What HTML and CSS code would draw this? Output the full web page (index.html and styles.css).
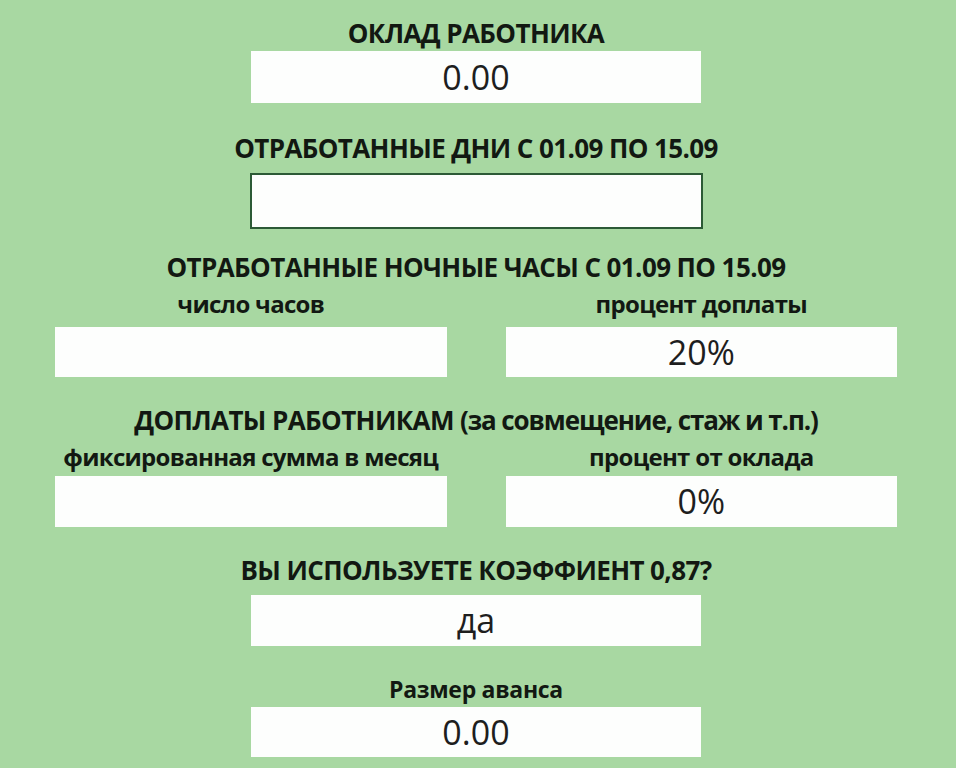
FILE: index.html
```html
<!DOCTYPE html>
<html lang="ru">
<head>
    <meta charset="UTF-8">
    <meta name="viewport" content="width=device-width, initial-scale=1.0">
    <title>Расчёт аванса</title>
    <link rel="stylesheet" href="styles.css">
</head>
<body>
    <main class="form">
        <h2 class="title t-salary">ОКЛАД РАБОТНИКА</h2>
        <div class="field single f-salary">0.00</div>

        <h2 class="title t-days">ОТРАБОТАННЫЕ ДНИ С 01.09 ПО 15.09</h2>
        <div class="field single active f-days"></div>

        <h2 class="title t-night">ОТРАБОТАННЫЕ НОЧНЫЕ ЧАСЫ С 01.09 ПО 15.09</h2>
        <div class="pair">
            <div class="label">число часов</div>
            <div class="label">процент доплаты</div>
        </div>
        <div class="pair boxes-night">
            <div class="field"></div>
            <div class="field">20%</div>
        </div>

        <h2 class="title t-extra">ДОПЛАТЫ РАБОТНИКАМ <span class="note">(за совмещение, стаж и т.п.)</span></h2>
        <div class="pair label-extra">
            <div class="label">фиксированная сумма в месяц</div>
            <div class="label">процент от оклада</div>
        </div>
        <div class="pair boxes-extra">
            <div class="field tall"></div>
            <div class="field tall">0%</div>
        </div>

        <h2 class="title t-coef">ВЫ ИСПОЛЬЗУЕТЕ КОЭФФИЕНТ 0,87?</h2>
        <div class="field single tall f-coef">да</div>

        <h2 class="title small t-advance">Размер аванса</h2>
        <div class="field single f-advance">0.00</div>
    </main>
</body>
</html>
```

FILE: styles.css
```css
body {
    margin: 0;
    background-color: #a8d8a2;
    color: #121812;
    font-family: "Open Sans", "Noto Sans", sans-serif;
}

.form {
    width: 842px;
    margin: 0 0 0 55px;
    padding-top: 18px;
    display: flex;
    flex-direction: column;
    align-items: center;
}

.title {
    margin: 0;
    font-size: 26px;
    line-height: 30px;
    font-weight: 700;
    letter-spacing: -0.6px;
    text-align: center;
    white-space: nowrap;
}

.title .note {
    letter-spacing: -1.1px;
}

.title.small {
    font-size: 23px;
    letter-spacing: -0.3px;
}

.t-days { margin-top: 30px; }
.t-night { margin-top: 23px; }
.t-extra { margin-top: 28px; }
.t-coef { margin-top: 28px; }
.t-advance { margin-top: 28px; }

/* white value cells */
.field {
    box-sizing: border-box;
    height: 50px;
    line-height: 50px;
    background-color: #fdfefd;
    color: #1e1e1e;
    font-size: 34px;
    font-weight: 400;
    text-align: center;
}

.field.tall {
    height: 51px;
    line-height: 51px;
}

.single {
    width: 450px;
    margin-top: 3px;
}

.f-salary {
    height: 52px;
    line-height: 52px;
}

.field.active {
    width: 453px;
    height: 56px;
    margin-top: 10px;
    border: 2px solid #2c5a36;
}

.f-coef { margin-top: 10px; }

.pair {
    width: 100%;
    display: grid;
    grid-template-columns: 1fr 1fr;
    column-gap: 59px;
}

.label {
    font-size: 24px;
    line-height: 30px;
    font-weight: 700;
    letter-spacing: -0.7px;
    text-align: center;
    white-space: nowrap;
    margin-top: 7px;
}

.boxes-night { margin-top: 8px; }
.boxes-extra { margin-top: 4px; }
```
